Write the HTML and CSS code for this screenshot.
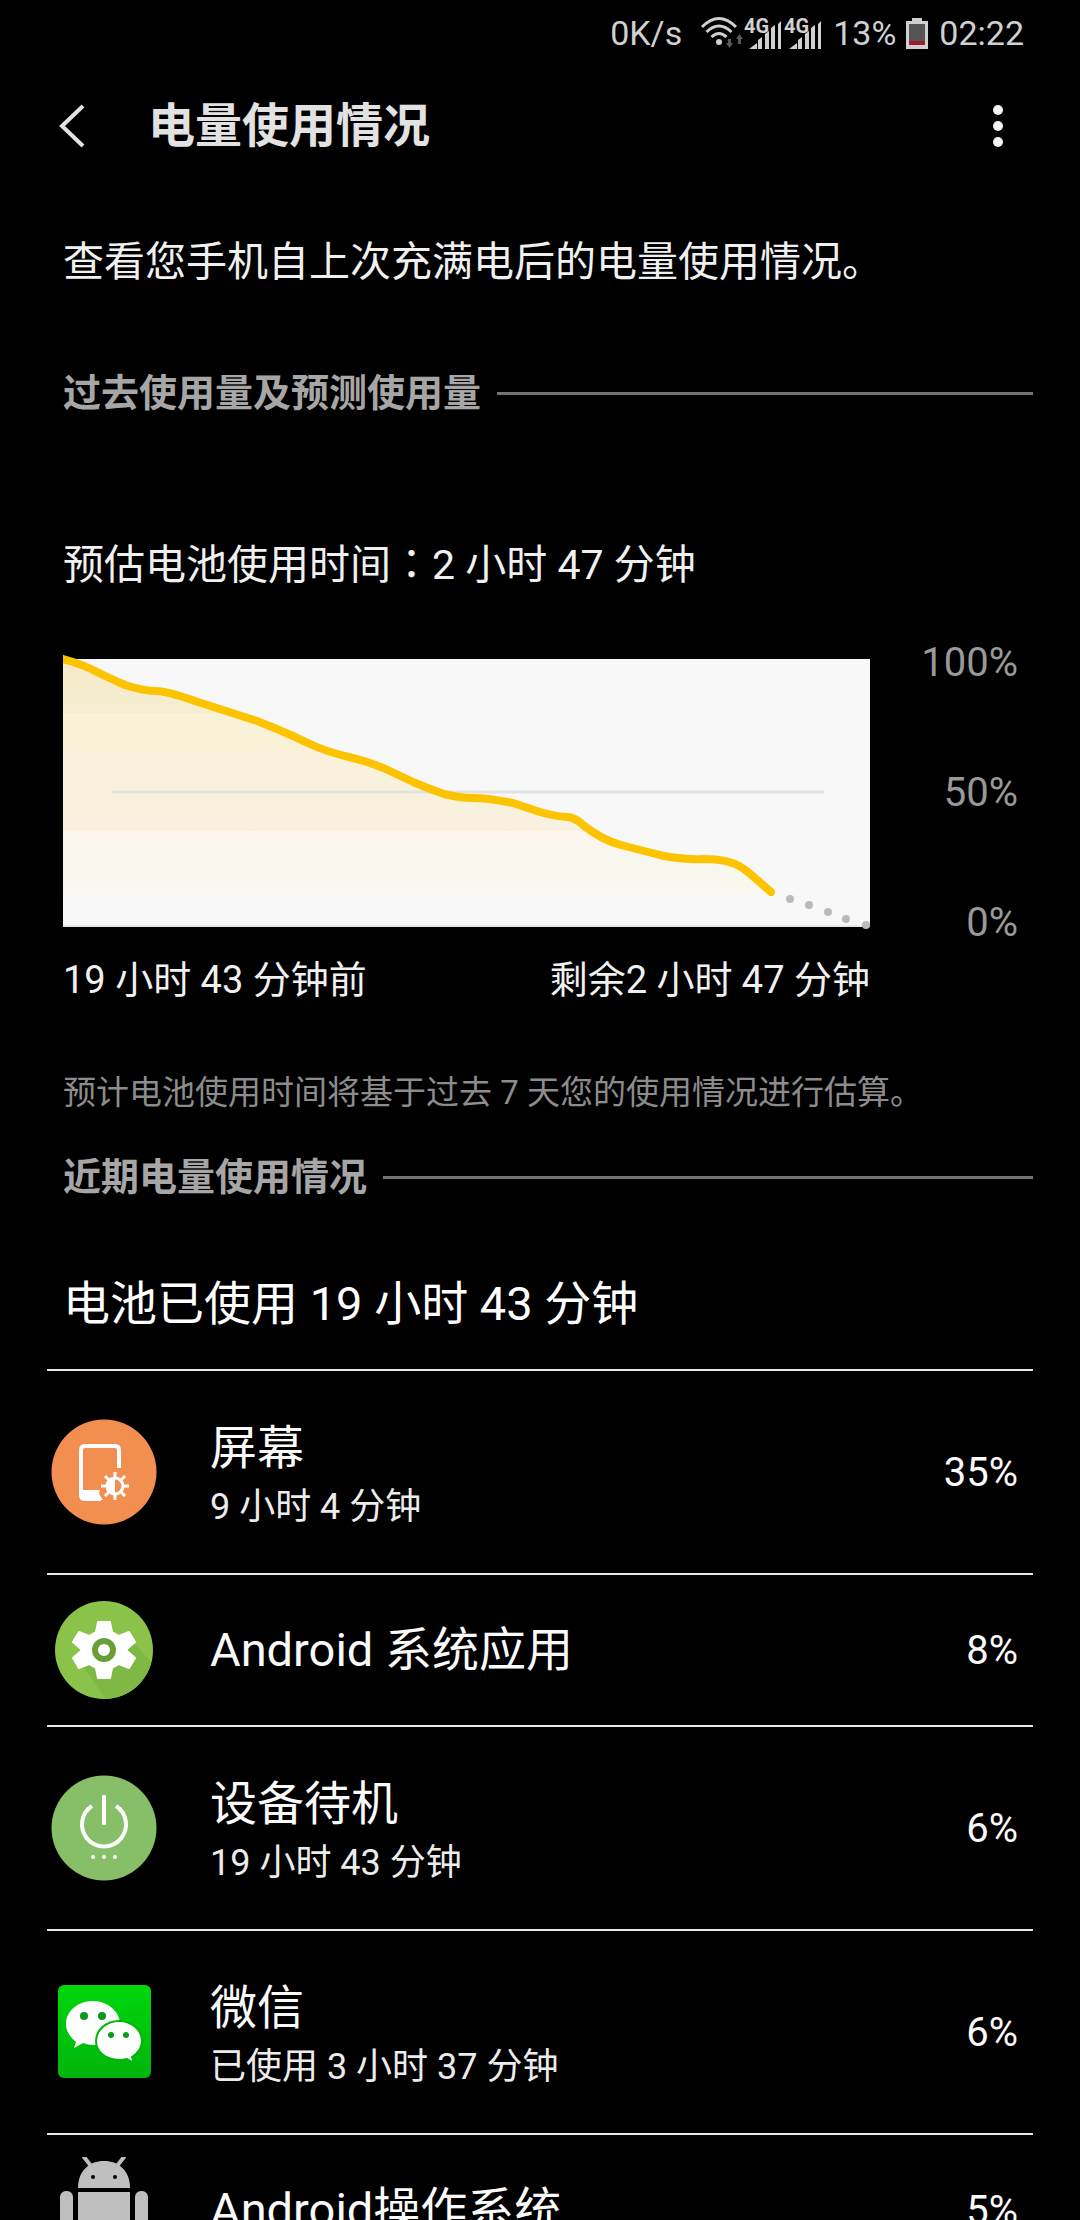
FILE: index.html
```html
<!DOCTYPE html>
<html lang="zh-CN">
<head>
    <meta charset="UTF-8">
    <meta name="viewport" content="width=device-width, initial-scale=1.0">
    <title>电量使用情况</title>
    <link rel="stylesheet" href="styles.css">
</head>
<body>
    <div class="status-bar">
        <span class="net-speed">0K/s</span>
        <svg class="wifi" width="44" height="34" viewBox="0 0 44 34" fill="none" stroke="#d0d0d0" stroke-width="3">
            <path d="M2 11Q19 -6 36 11M6.500 16Q19 4 31.500 16M11.500 21Q19 14 26.500 21"/>
            <circle cx="19" cy="26" r="3" fill="#d0d0d0" stroke="none"/>
            <path d="M26 27h2v-4h3v4h2l-3.500 5zM36 23h2v5h3v-5h2l-3.500 -5z" fill="#5a5a5a" stroke="none"/>
        </svg>
        <svg class="signal" width="78" height="34" viewBox="0 0 78 34" fill="#d0d0d0">
            <text x="0" y="17" class="signal-text">4G</text>
            <path d="M5 33l8-6v6zM14 24l4-3v12h-4zM21 18l4-3v18h-4zM27 12l4-3v24h-4zM34 8l3-3v28h-3z"/>
            <text x="40" y="17" class="signal-text">4G</text>
            <path d="M45 33l8-6v6zM54 24l4-3v12h-4zM61 18l4-3v18h-4zM67 12l4-3v24h-4zM74 8l3-3v28h-3z"/>
        </svg>
        <span class="battery-text">13%</span>
        <svg class="battery" width="22" height="34" viewBox="0 0 22 34">
            <path d="M6 2h10v3h6v28H0V5h6z" fill="#d0d0d0"/>
            <path d="M3 8h16v17H3z" fill="#555"/>
            <path d="M3 25h16v4H3z" fill="#9c1c30"/>
        </svg>
        <span class="clock">02:22</span>
    </div>

    <header class="app-bar">
        <button type="button" class="icon-btn back" aria-label="返回">
            <svg width="28" height="46" viewBox="0 0 28 46" fill="none" stroke="#e2e2e2" stroke-width="4">
                <path d="M25 3L4 23l21 20"/>
            </svg>
        </button>
        <h1>电量使用情况</h1>
        <button type="button" class="icon-btn more" aria-label="更多选项">
            <svg width="12" height="44" viewBox="0 0 12 44" fill="#f2f2f2">
                <circle cx="6" cy="6" r="5"/>
                <circle cx="6" cy="22" r="5"/>
                <circle cx="6" cy="38" r="5"/>
            </svg>
        </button>
    </header>

    <main>
        <p class="intro">查看您手机自上次充满电后的电量使用情况。</p>

        <h2 class="section-title">过去使用量及预测使用量</h2>
        <p class="estimate">预估电池使用时间<span class="colon" lang="zh-TW">：</span>2 小时 47 分钟</p>

        <div class="chart">
            <svg class="plot" viewBox="0 0 807 268">
                <defs>
                    <linearGradient id="usage" gradientUnits="userSpaceOnUse" x1="0" y1="0" x2="0" y2="268">
                        <stop offset="0" stop-color="#f8e9c8"/>
                        <stop offset="0.2" stop-color="#f5eed2"/>
                        <stop offset="0.2" stop-color="#f9f2d6"/>
                        <stop offset="0.64" stop-color="#f8f1e0"/>
                        <stop offset="0.64" stop-color="#fdf5ee"/>
                        <stop offset="0.71" stop-color="#fbf6ee"/>
                        <stop offset="0.71" stop-color="#f8f8ee"/>
                        <stop offset="0.88" stop-color="#f8f8f0"/>
                    </linearGradient>
                    <clipPath id="edge">
                        <path d="M0 -10h807v300H0z"/>
                    </clipPath>
                </defs>
                <path d="M0 0h807v268H0z" fill="#f8f8f8"/>
                <path d="M0 0L10 3Q20 6 32 12Q44 18 62 26Q80 32 94 32Q107 33 132 42L194 62Q212 69 230 77L247 85Q264 93 290 99Q310 104 327 112L350 123Q364 129 381 135Q397 139 409 139Q425 139 450 144Q465 149 477 153Q495 158 505 158Q513 159 520 166Q539 181 558 186Q577 191 601 197Q625 201 640 200Q656 200 666 203Q677 205 692 219L708 233V236H0z" fill="url(#usage)"/>
                <path d="M49 133H761" fill="none" stroke="#e2e2e0" stroke-width="3"/>
                <path d="M0 267H807" fill="none" stroke="#e8e8e8" stroke-width="2"/>
                <g clip-path="url(#edge)">
                    <path d="M-10 -4L0 0L10 3Q20 6 32 12Q44 18 62 26Q80 32 94 32Q107 33 132 42L194 62Q212 69 230 77L247 85Q264 93 290 99Q310 104 327 112L350 123Q364 129 381 135Q397 139 409 139Q425 139 450 144Q465 149 477 153Q495 158 505 158Q513 159 520 166Q539 181 558 186Q577 191 601 197Q625 201 640 200Q656 200 666 203Q677 205 692 219L708 233" fill="none" stroke="#fcc400" stroke-width="8" stroke-linecap="round" stroke-linejoin="round"/>
                    <g fill="#bababa">
                        <circle cx="727" cy="240" r="4"/>
                        <circle cx="746" cy="246" r="4"/>
                        <circle cx="765" cy="253" r="4"/>
                        <circle cx="783" cy="260" r="4"/>
                        <circle cx="803" cy="266" r="4"/>
                    </g>
                </g>
            </svg>
            <div class="y-axis">
                <span>100%</span>
                <span>50%</span>
                <span>0%</span>
            </div>
            <div class="x-axis">
                <span>19 小时 43 分钟前</span>
                <span>剩余2 小时 47 分钟</span>
            </div>
        </div>
        <p class="note">预计电池使用时间将基于过去 7 天您的使用情况进行估算。</p>

        <h2 class="section-title">近期电量使用情况</h2>
        <p class="summary">电池已使用 19 小时 43 分钟</p>

        <ul class="app-list">
            <li>
                <a href="#" class="app-row tall">
                    <svg class="app-icon" width="106" height="106" viewBox="0 0 106 106">
                        <circle cx="53" cy="53" r="52.500" fill="#f28f50"/>
                        <path d="M68 49V31q0-4-4-4H34q-4 0-4 4v45q0 4 4 4h16" fill="none" stroke="#fff" stroke-width="4"/>
                        <path d="M30 71h19l-1 4 4 6H34q-4 0-4-4z" fill="#fff"/>
                        <g stroke="#fff" stroke-width="3">
                            <path d="M64 53v28M50 67h28M54 57l20 20M74 57l-20 20"/>
                        </g>
                        <circle cx="64" cy="67" r="8" fill="#f28f50" stroke="#fff" stroke-width="3"/>
                        <path d="M64 59a8 8 0 0 0 0 16z" fill="#fff"/>
                    </svg>
                    <span class="app-text">
                        <span class="app-name">屏幕</span>
                        <span class="app-time">9 小时 4 分钟</span>
                    </span>
                    <span class="app-percent">35%</span>
                </a>
            </li>
            <li>
                <a href="#" class="app-row">
                    <svg class="app-icon" width="106" height="106" viewBox="0 0 106 106">
                        <defs>
                            <clipPath id="disc"><circle cx="53" cy="53" r="49"/></clipPath>
                        </defs>
                        <circle cx="53" cy="53" r="49" fill="#8bc34a"/>
                        <path d="M30 66L75 38L110 75V110H60z" fill="#7fb845" clip-path="url(#disc)"/>
                        <path d="M47 25h12l2 10 7 4 10-4 6 10-8 7v2l8 7-6 10-10-4-7 4-2 10h-12l-2-10-7-4-10 4-6-10 8-7v-2l-8-7 6-10 10 4 7-4z" fill="#fff" stroke="#fff" stroke-width="2" stroke-linejoin="round"/>
                        <circle cx="53" cy="53" r="9" fill="#fff" stroke="#689f38" stroke-width="6"/>
                    </svg>
                    <span class="app-text">
                        <span class="app-name">Android 系统应用</span>
                    </span>
                    <span class="app-percent">8%</span>
                </a>
            </li>
            <li>
                <a href="#" class="app-row tall">
                    <svg class="app-icon" width="106" height="106" viewBox="0 0 106 106">
                        <circle cx="53" cy="53" r="52.500" fill="#87bf69"/>
                        <path d="M53 20v30M41 31a22 22 0 1 0 24 0" fill="none" stroke="#fff" stroke-width="4"/>
                        <g fill="#fff">
                            <circle cx="42" cy="82" r="2"/>
                            <circle cx="53" cy="82" r="2"/>
                            <circle cx="64" cy="82" r="2"/>
                        </g>
                    </svg>
                    <span class="app-text">
                        <span class="app-name">设备待机</span>
                        <span class="app-time">19 小时 43 分钟</span>
                    </span>
                    <span class="app-percent">6%</span>
                </a>
            </li>
            <li>
                <a href="#" class="app-row tall">
                    <svg class="app-icon" width="106" height="106" viewBox="0 0 106 106">
                        <defs>
                            <linearGradient id="wechat" x1="0" y1="0" x2="0" y2="1">
                                <stop offset="0" stop-color="#00d70c"/>
                                <stop offset="1" stop-color="#00b40c"/>
                            </linearGradient>
                        </defs>
                        <rect x="7" y="6" width="93" height="93" rx="6" fill="url(#wechat)"/>
                        <path d="M42 22c-15 0-27 10-27 23 0 7 4 13 10 18l-2 6 9-5c3 1 7 2 10 2 15 0 27-9 27-21s-12-23-27-23z" fill="#fff"/>
                        <circle cx="33" cy="37" r="4" fill="#0b9a1c"/>
                        <circle cx="51" cy="37" r="4" fill="#0b9a1c"/>
                        <path d="M68 42c-13 0-23 9-23 20s10 19 23 19c3 0 5 0 8-1l7 4-2-6c6-4 10-10 10-16 0-11-10-20-23-20z" fill="#fff" stroke="#00b80c" stroke-width="2"/>
                        <circle cx="60" cy="56" r="3" fill="#0b9a1c"/>
                        <circle cx="75" cy="56" r="3" fill="#0b9a1c"/>
                    </svg>
                    <span class="app-text">
                        <span class="app-name">微信</span>
                        <span class="app-time">已使用 3 小时 37 分钟</span>
                    </span>
                    <span class="app-percent">6%</span>
                </a>
            </li>
            <li>
                <a href="#" class="app-row">
                    <svg class="app-icon" width="106" height="106" viewBox="0 0 106 106" fill="#bfbfbf">
                        <path d="M27 31C27 14 38 4 53 4s26 10 26 27z"/>
                        <path d="M33 0l7 9M73 0l-7 9" stroke="#bfbfbf" stroke-width="4" stroke-linecap="round"/>
                        <circle cx="42" cy="20" r="2" fill="#000"/>
                        <circle cx="64" cy="20" r="2" fill="#000"/>
                        <path d="M27 35h52v42q0 5-5 5H32q-5 0-5-5z"/>
                        <rect x="9" y="34" width="13" height="40" rx="6"/>
                        <rect x="84" y="34" width="13" height="40" rx="6"/>
                        <rect x="36" y="70" width="12" height="32" rx="6"/>
                        <rect x="58" y="70" width="12" height="32" rx="6"/>
                    </svg>
                    <span class="app-text">
                        <span class="app-name">Android操作系统</span>
                    </span>
                    <span class="app-percent">5%</span>
                </a>
            </li>
        </ul>
    </main>
</body>
</html>
```

FILE: styles.css
```css
* {
    box-sizing: border-box;
}

body {
    display: flex;
    flex-direction: column;
    height: 100vh;
    margin: 0;
    overflow: hidden;
    background-color: #000;
    color: #f0f0f0;
    font-family: Roboto, "Noto Sans CJK SC", sans-serif;
}

h1,
h2,
p,
ul {
    margin: 0;
    padding: 0;
}

svg {
    display: block;
    flex: none;
}

/* Status bar */
.status-bar {
    display: flex;
    flex: none;
    justify-content: flex-end;
    align-items: center;
    height: 66px;
    padding-right: 56px;
    color: #d0d0d0;
    font-size: 34px;
    line-height: 40px;
}

.wifi {
    margin-left: 18px;
}

.signal {
    overflow: visible;
}

.signal-text {
    font-size: 20px;
    font-weight: bold;
}

.battery-text {
    margin: 0 10px 0 11px;
}

.clock {
    margin-left: 11px;
}

/* Title bar */
.app-bar {
    display: flex;
    flex: none;
    align-items: center;
    height: 120px;
    padding: 0 76px 0 58px;
}

.app-bar h1 {
    flex: 1;
    margin-left: 62px;
    color: #e2e2e2;
    font-size: 47px;
    font-weight: bold;
    line-height: 60px;
}

.icon-btn {
    padding: 0;
    border: none;
    background: none;
    cursor: pointer;
}

/* Content */
main {
    flex: 1;
    min-height: 0;
    padding: 46px 47px 0;
    overflow-y: auto;
    scrollbar-width: none;
}

.intro,
.estimate {
    padding: 0 16px;
    font-size: 41px;
    line-height: 60px;
}

.section-title {
    display: flex;
    align-items: center;
    gap: 16px;
    margin-top: 71px;
    padding-left: 16px;
    color: #a6a6a6;
    font-size: 38px;
    font-weight: bold;
    line-height: 60px;
}

.section-title::after {
    content: "";
    flex: 1;
    height: 3px;
    background-color: #737373;
}

.estimate {
    margin-top: 112px;
}

.colon {
    font-family: "Noto Sans CJK TC", sans-serif;
    line-height: 1;
}

/* Battery chart */
.chart {
    display: grid;
    grid-template-columns: 1fr 148px;
    align-items: center;
    row-gap: 17px;
    margin-top: 48px;
    padding: 0 15px 0 16px;
}

.plot {
    width: 100%;
    overflow: visible;
}

.y-axis {
    display: flex;
    flex-direction: column;
    justify-content: space-between;
    height: 300px;
    color: #999;
    font-size: 40px;
    line-height: 40px;
    text-align: right;
}

.x-axis {
    display: flex;
    justify-content: space-between;
    font-size: 38px;
    line-height: 40px;
}

.note {
    margin-top: 73px;
    padding: 0 16px;
    color: #8c8c8c;
    font-size: 33px;
    line-height: 40px;
}

.note + .section-title {
    margin-top: 34px;
}

.summary {
    margin-top: 67px;
    padding: 0 16px;
    color: #fff;
    font-size: 47px;
    line-height: 60px;
}

/* App list */
.app-list {
    margin-top: 35px;
    border-top: 2px solid #e8e8e8;
    list-style: none;
}

.app-list li {
    border-bottom: 2px solid #e8e8e8;
}

.app-row {
    display: flex;
    align-items: center;
    height: 150px;
    padding: 0 15px 0 4px;
    color: #fafafa;
    text-decoration: none;
}

.app-row.tall {
    height: 202px;
}

.app-text {
    display: flex;
    flex: 1;
    flex-direction: column;
    margin-left: 53px;
}

.tall .app-text {
    padding-top: 10px;
}

.app-name {
    font-size: 47px;
    line-height: 60px;
}

.app-time {
    color: #ececec;
    font-size: 36px;
    line-height: 58px;
}

.app-percent {
    font-size: 40px;
}
```
